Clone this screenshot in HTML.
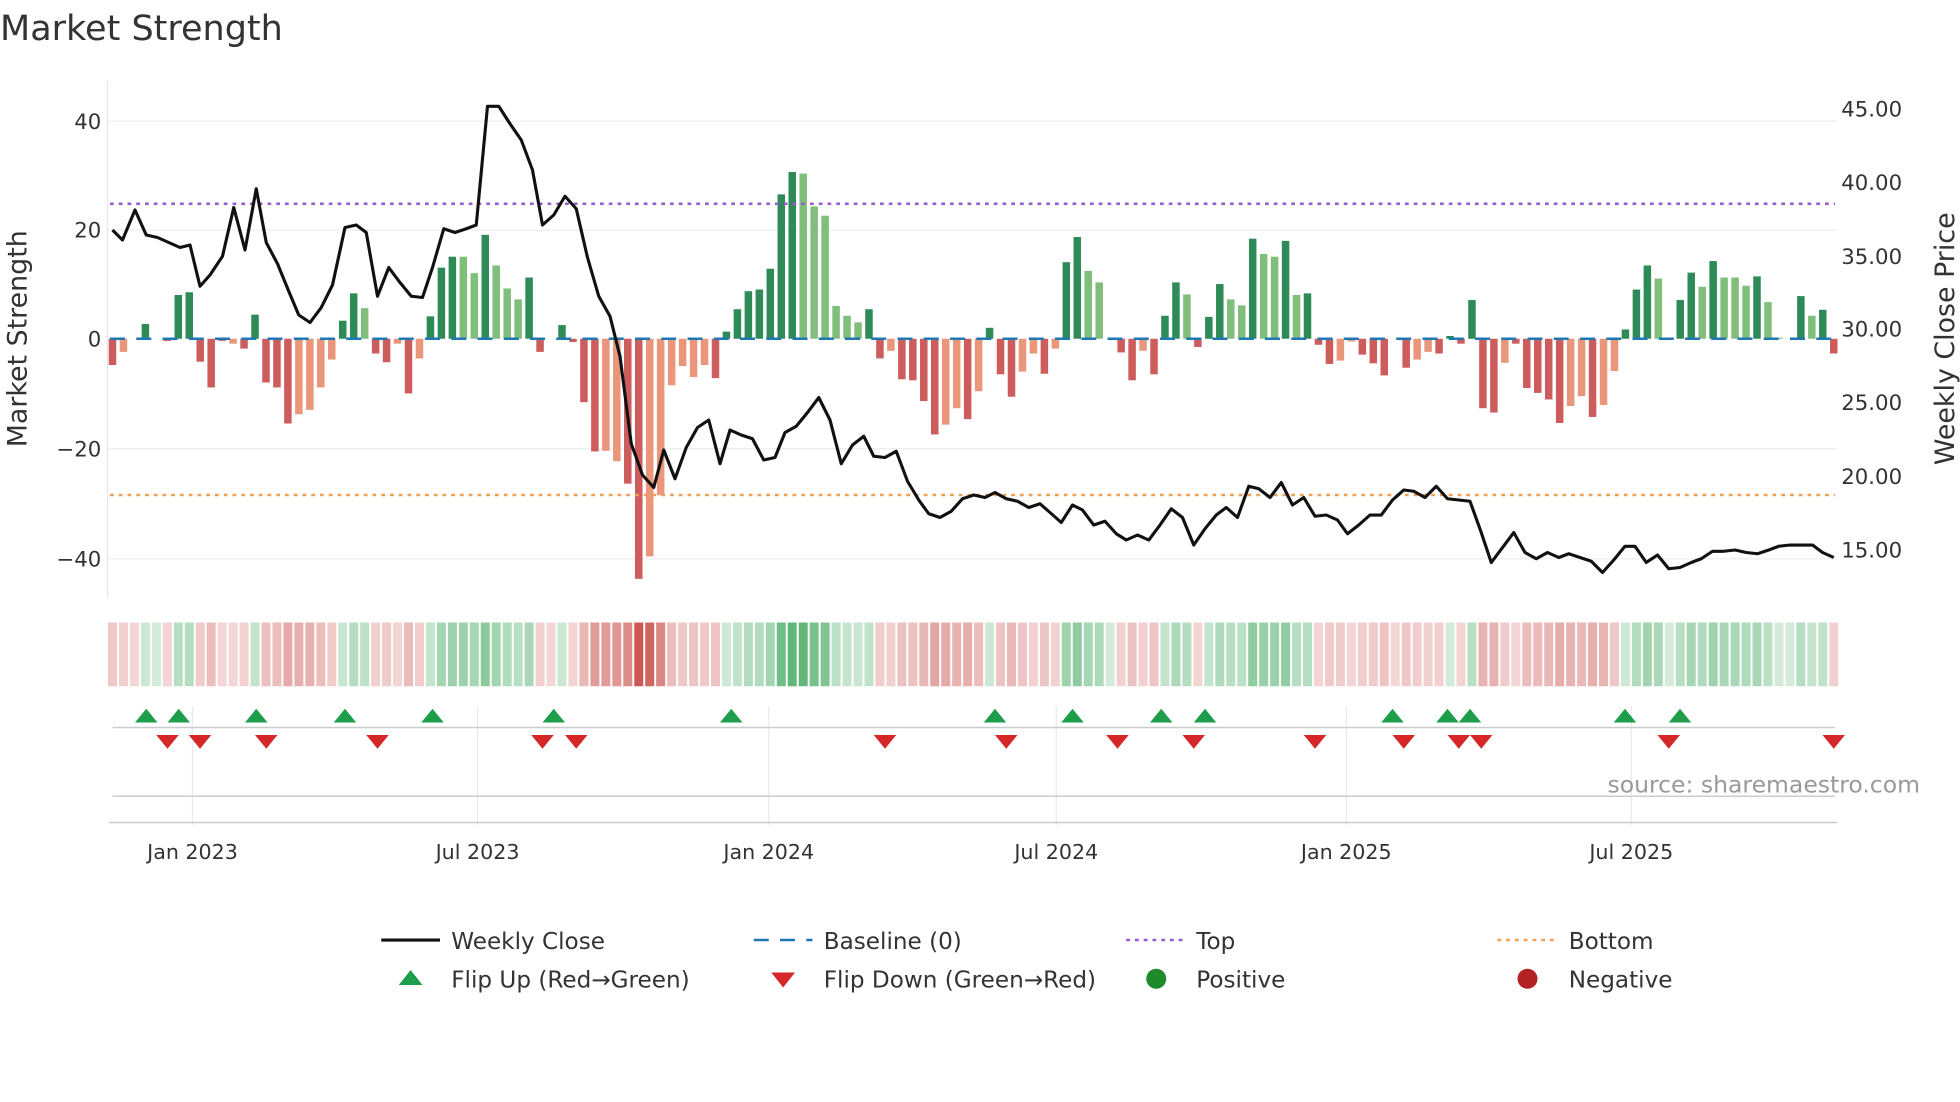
<!DOCTYPE html>
<html><head><meta charset="utf-8"><style>
html,body{margin:0;padding:0;background:#fff;}
svg{display:block;font-family:"DejaVu Sans","Liberation Sans",sans-serif;}
</style></head><body>
<svg id="s" width="1960" height="1102" viewBox="0 0 1568 881.6" xmlns="http://www.w3.org/2000/svg">
<text x="0" y="32" font-size="28" fill="#333">Market Strength</text>
<g stroke="#eceef2" stroke-width="1">
<line x1="86" y1="97" x2="1470" y2="97"/><line x1="86" y1="184" x2="1470" y2="184"/>
<line x1="86" y1="359" x2="1470" y2="359"/><line x1="86" y1="447" x2="1470" y2="447"/>
</g>
<line x1="86" y1="65" x2="86" y2="478" stroke="#e4e6ea"/>
<g font-size="17" fill="#333" text-anchor="end">
<text x="81" y="103">40</text><text x="81" y="190">20</text><text x="81" y="277">0</text>
<text x="81" y="365">−20</text><text x="81" y="453">−40</text>
</g>
<g font-size="17" fill="#333">
<text x="1473" y="93">45.00</text><text x="1473" y="152">40.00</text><text x="1473" y="211">35.00</text>
<text x="1473" y="269">30.00</text><text x="1473" y="328">25.00</text><text x="1473" y="387">20.00</text><text x="1473" y="446">15.00</text>
</g>
<text transform="translate(21,271) rotate(-90)" font-size="21.5" fill="#333" text-anchor="middle">Market Strength</text>
<text transform="translate(1563,271) rotate(-90)" font-size="21.5" fill="#333" text-anchor="middle">Weekly Close Price</text>
<g id="bars"></g>
<line x1="88" y1="271" x2="1468" y2="271" stroke="#1f77b4" stroke-width="2" stroke-dasharray="12,9"/>
<line x1="88" y1="163" x2="1468" y2="163" stroke="#9b59d6" stroke-width="2" stroke-dasharray="3,4"/>
<line x1="88" y1="396" x2="1468" y2="396" stroke="#f0a050" stroke-width="2" stroke-dasharray="3,4"/>
<polyline id="price" fill="none" stroke="#111" stroke-width="2.5" stroke-linejoin="round"/>
<g id="heat"></g>
<g stroke="#e8eaee"><line x1="154" y1="565" x2="154" y2="660"/><line x1="382" y1="565" x2="382" y2="660"/><line x1="615" y1="565" x2="615" y2="660"/><line x1="845" y1="565" x2="845" y2="660"/><line x1="1077" y1="565" x2="1077" y2="660"/><line x1="1305" y1="565" x2="1305" y2="660"/></g>
<line x1="90" y1="582" x2="1468" y2="582" stroke="#ccc" stroke-width="1.2"/>
<line x1="90" y1="637" x2="1468" y2="637" stroke="#ccc" stroke-width="1.2"/>
<line x1="87" y1="658" x2="1470" y2="658" stroke="#ccc" stroke-width="1.2"/>
<g id="flips"></g>
<text x="1536" y="634" font-size="18.8" fill="#999" text-anchor="end">source: sharemaestro.com</text>
<g font-size="16.5" fill="#333" text-anchor="middle">
<text x="154" y="687">Jan 2023</text><text x="382" y="687">Jul 2023</text><text x="615" y="687">Jan 2024</text>
<text x="845" y="687">Jul 2024</text><text x="1077" y="687">Jan 2025</text><text x="1305" y="687">Jul 2025</text>
</g>
<g font-size="18.5" fill="#333">
<line x1="305" y1="752" x2="352" y2="752" stroke="#111" stroke-width="2.5"/><text x="361" y="759">Weekly Close</text>
<line x1="603" y1="752" x2="650" y2="752" stroke="#1f77b4" stroke-width="2" stroke-dasharray="12,9"/><text x="659" y="759">Baseline (0)</text>
<line x1="901" y1="752" x2="948" y2="752" stroke="#9b59d6" stroke-width="2" stroke-dasharray="3,4"/><text x="957" y="759">Top</text>
<line x1="1198" y1="752" x2="1245" y2="752" stroke="#f0a050" stroke-width="2" stroke-dasharray="3,4"/><text x="1255" y="759">Bottom</text>
<polygon points="319,788 338,788 328.5,776" fill="#1e9e4a"/><text x="361" y="790">Flip Up (Red→Green)</text>
<polygon points="617,778 636,778 626.5,790" fill="#d62728"/><text x="659" y="790">Flip Down (Green→Red)</text>
<circle cx="925" cy="783" r="8" fill="#1e8a2a"/><text x="957" y="790">Positive</text>
<circle cx="1222" cy="783" r="8" fill="#b22222"/><text x="1255" y="790">Negative</text>
</g>
</svg>
<script>
var d="-4.8R -2.4O 0 2.7D 0 -0.4R 8D 8.5D -4.2R -8.9R -0.4R -0.9O -1.8R 4.4D -8R -8.9R -15.5R -13.8O -13O -8.9O -3.8O 3.3D 8.3D 5.6L -2.7R -4.3R -0.9O -10R -3.6O 4.1D 13D 15D 15L 12L 19D 13.4L 9.2L 7.2L 11.2D -2.4R 0 2.5D -0.6R -11.6R -20.6R -20.5O -22.4O -26.5R -43.9R -39.8O -28.6O -8.5O -5O -7O -4.8O -7.2R 1.3D 5.4D 8.7D 9D 12.8D 26.4D 30.5D 30.2L 24.2L 22.5L 6L 4.2L 3L 5.4D -3.6R -2.2O -7.4R -7.6R -11.4R -17.5R -15.7O -12.7O -14.7R -9.6O 2D -6.5R -10.6R -6O -2.7O -6.4R -1.8O 14D 18.6D 12.4L 10.3L 0 -2.5R -7.6R -2.2O -6.5R 4.2D 10.3D 8.1L -1.5R 4D 10D 7.2L 6.1L 18.3D 15.5L 15L 17.9D 8L 8.3D -1.1R -4.6R -4O -0.5O -2.9R -4.5R -6.7R 0 -5.3R -3.8O -2.4O -2.7R 0.5D -0.9R 7.1D -12.7R -13.5R -4.4O -0.9R -9R -9.9R -11.1R -15.4R -12.3O -10.5O -14.3R -12.1O -5.9O 1.7D 9D 13.4D 11L 0 7.1D 12.1D 9.5L 14.2D 11.2L 11.2L 9.7L 11.4D 6.7L 0.2L 0 7.8D 4.2L 5.3D -2.7R".split(" ");
var col={D:"#2e8b57",L:"#7fbf7b",R:"#cd5c5c",O:"#e9967a"};
var n=d.length,x0=90,x1=1467,sp=(x1-x0)/(n-1),b="",h="";
for(var i=0;i<n;i++){var t=d[i],c=t.slice(-1),v=parseFloat(t);if(isNaN(v))v=0;var x=x0+i*sp;
if(v!=0&&col[c]){var y=271,hh=Math.abs(v)*4.375;b+='<rect x="'+(x-3)+'" y="'+(v>0?y-hh:y)+'" width="6" height="'+hh+'" fill="'+col[c]+'"/>';}
var g=(v>0||(v==0&&i>0&&(d[i-1].slice(-1)=="D"||d[i-1].slice(-1)=="L"))),a;
var f;if(g){a=0.22+0.6*Math.min(Math.abs(v)/31,1);f="rgba(60,165,90,"+a.toFixed(2)+")";}else{a=0.22+0.7*Math.min(Math.abs(v)/44,1);f="rgba(200,75,70,"+a.toFixed(2)+")";}
h+='<rect x="'+(x-3.6)+'" y="498" width="7.2" height="51" fill="'+f+'"/>';}
document.getElementById("bars").innerHTML=b;document.getElementById("heat").innerHTML=h;
var p="90,184 98,192 108,168 117,188 126,190 135,194 144,198 152,196 160,229 168,220 178,205 187,166 196,200 205,151 213,194 222,211 231,233 239,252 248,258 257,246 266,228 276,182 285,180 293,186 302,237 311,214 320,226 329,237 338,238 346,214 355,183 364,186 373,183 381,180 390,85 399,85 408,99 417,112 426,136 434,180 443,172 452,157 461,167 470,206 479,237 488,253 496,285 505,355 514,380 523,390 531,360 540,383 549,358 558,342 567,336 576,371 584,344 593,348 602,351 611,368 620,366 628,346 637,341 646,330 655,318 664,336 673,371 682,356 691,349 699,365 708,366 717,361 726,385 735,400 743,411 752,414 761,409 770,399 779,396 788,398 796,394 805,399 814,401 823,406 832,403 840,410 849,418 858,404 866,408 875,420 884,417 893,427 901,432 910,428 919,432 928,420 937,407 946,414 955,436 964,423 973,412 981,406 990,414 999,389 1007,391 1016,398 1025,386 1034,404 1043,398 1052,413 1061,412 1070,416 1078,427 1087,420 1096,412 1105,412 1114,400 1123,392 1131,393 1140,398 1149,389 1158,399 1167,400 1176,401 1185,426 1193,450 1202,438 1211,426 1220,442 1229,447 1238,442 1247,446 1255,443 1264,446 1273,449 1282,458 1291,448 1300,437 1308,437 1317,450 1326,444 1335,455 1344,454 1353,450 1361,447 1370,441 1379,441 1388,440 1397,442 1406,443 1415,440 1423,437 1432,436 1441,436 1450,436 1458,442 1467,446";
document.getElementById("price").setAttribute("points",p);
var up=[117,143,205,276,346,443,585,796,858,929,964,1114,1158,1176,1300,1344],dn=[134,160,213,302,434,461,708,805,894,955,1052,1123,1167,1185,1335,1467],f2="";
up.forEach(function(x){f2+='<polygon points="'+(x-9)+',578 '+(x+9)+',578 '+x+',567" fill="#1e9e4a"/>';});
dn.forEach(function(x){f2+='<polygon points="'+(x-9)+',588 '+(x+9)+',588 '+x+',599" fill="#d62728"/>';});
document.getElementById("flips").innerHTML=f2;
</script>
</body></html>
